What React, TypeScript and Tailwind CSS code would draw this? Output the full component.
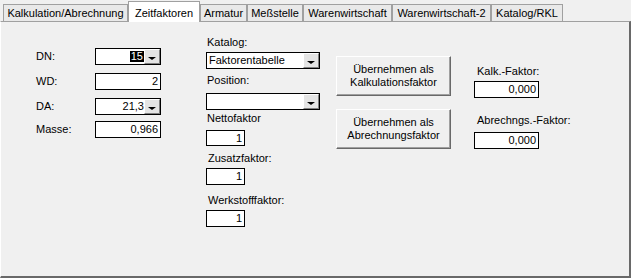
import React from "react";

const tabs = [
  { label: "Kalkulation/Abrechnung", w: "w-[125px]" },
  { label: "Zeitfaktoren", w: "w-[72px]", active: true },
  { label: "Armatur", w: "w-[47px]" },
  { label: "Meßstelle", w: "w-[56px]" },
  { label: "Warenwirtschaft", w: "w-[89px]" },
  { label: "Warenwirtschaft-2", w: "w-[99px]" },
  { label: "Katalog/RKL", w: "w-[72px]" },
];

const DropButton = () => (
  <div className="w-[16px] h-full bg-[#e4e4e4] border-t border-l border-t-white border-l-white border-r border-b border-r-[#808080] border-b-[#808080] flex items-end justify-center pb-[3px]">
    <div className="w-0 h-0 border-l-[4px] border-r-[4px] border-t-[3px] border-l-transparent border-r-transparent border-t-black" />
  </div>
);

const Field = ({ value, w, h = "h-[17px]" }: { value: string; w: string; h?: string }) => (
  <div className={`${w} ${h} bg-white border border-black flex items-center justify-end pr-[2px] leading-none`}>
    {value}
  </div>
);

const Combo = ({ value, w, right, selected }: { value: string; w: string; right?: boolean; selected?: boolean }) => (
  <div className={`${w} h-[17px] bg-white border border-black flex`}>
    <div className={`flex-1 flex items-center leading-none ${right ? "justify-end" : "justify-start pl-[2px]"}`}>
      {selected ? <span className="bg-black text-white px-px">{value}</span> : value}
    </div>
    <DropButton />
  </div>
);

const Button = ({ lines }: { lines: string[] }) => (
  <div className="w-[115px] h-[40px] bg-[#f0f0f0] border border-t-white border-l-white border-r-[#696969] border-b-[#696969] shadow-[inset_-1px_-1px_0_#a0a0a0] flex flex-col items-center justify-center leading-[13px]">
    {lines.map((l) => (
      <span key={l}>{l}</span>
    ))}
  </div>
);

export default function App() {
  return (
    <div className="w-[631px] h-[278px] bg-[#f0f0f0] text-[11px] text-black flex flex-col" style={{ fontFamily: '"Liberation Sans", Arial, sans-serif' }}>
      <div className="h-[21px] flex items-end pl-[3px] relative z-10">
        {tabs.map((t) =>
          t.active ? (
            <div key={t.label} className={`${t.w} h-[21px] bg-white border-t border-l border-r border-t-[#a0a0a0] border-l-[#a0a0a0] border-r-[#a0a0a0] flex items-start justify-center pt-[3px] -mb-px`}>
              {t.label}
            </div>
          ) : (
            <div key={t.label} className={`${t.w} h-[17px] bg-[#e9e9e9] border-t border-l border-r border-[#a0a0a0] flex items-center justify-center`}>
              {t.label}
            </div>
          )
        )}
      </div>
      <div className="flex-1 border-t border-t-[#a0a0a0] border-l border-l-white border-r-2 border-r-[#696969] border-b-2 border-b-[#696969] flex">
        {/* Maße */}
        <div className="ml-[35px] pt-[26px] flex flex-col">
          <div className="flex items-center h-[17px] mb-[8px]">
            <span className="w-[59px]">DN:</span>
            <Combo value="15" w="w-[66px]" right selected />
          </div>
          <div className="flex items-center h-[17px] mb-[8px]">
            <span className="w-[59px]">WD:</span>
            <Field value="2" w="w-[66px]" />
          </div>
          <div className="flex items-center h-[17px] mb-[6px]">
            <span className="w-[59px]">DA:</span>
            <Combo value="21,3" w="w-[66px]" right />
          </div>
          <div className="flex items-center h-[17px]">
            <span className="w-[59px]">Masse:</span>
            <Field value="0,966" w="w-[66px]" />
          </div>
        </div>

        {/* Katalog */}
        <div className="ml-[45px] pt-[14px] flex flex-col w-[114px] leading-[13px]">
          <span className="pl-px">Katalog:</span>
          <div className="mt-[3px]">
            <Combo value="Faktorentabelle" w="w-[114px]" />
          </div>
          <span className="mt-[5px] pl-px">Position:</span>
          <div className="mt-[6px]">
            <Combo value="" w="w-[114px]" />
          </div>
          <span className="mt-[2px] pl-px">Nettofaktor</span>
          <div className="mt-[5px]">
            <Field value="1" w="w-[39px]" h="h-[16px]" />
          </div>
          <span className="mt-[6px] pl-[2px]">Zusatzfaktor:</span>
          <div className="mt-[3px]">
            <Field value="1" w="w-[39px]" />
          </div>
          <span className="mt-[9px] pl-[2px]">Werkstofffaktor:</span>
          <div className="mt-[3px]">
            <Field value="1" w="w-[39px]" />
          </div>
        </div>

        {/* Buttons */}
        <div className="ml-[16px] pt-[34px] flex flex-col gap-[13px]">
          <Button lines={["Übernehmen als", "Kalkulationsfaktor"]} />
          <Button lines={["Übernehmen als", "Abrechnungsfaktor"]} />
        </div>

        {/* Faktoren */}
        <div className="ml-[23px] pt-[43px] flex flex-col leading-[13px]">
          <span className="pl-[3px]">Kalk.-Faktor:</span>
          <div className="mt-[3px]">
            <Field value="0,000" w="w-[65px]" />
          </div>
          <span className="mt-[16px] pl-[3px]">Abrechngs.-Faktor:</span>
          <div className="mt-[5px]">
            <Field value="0,000" w="w-[65px]" />
          </div>
        </div>
      </div>
    </div>
  );
}
